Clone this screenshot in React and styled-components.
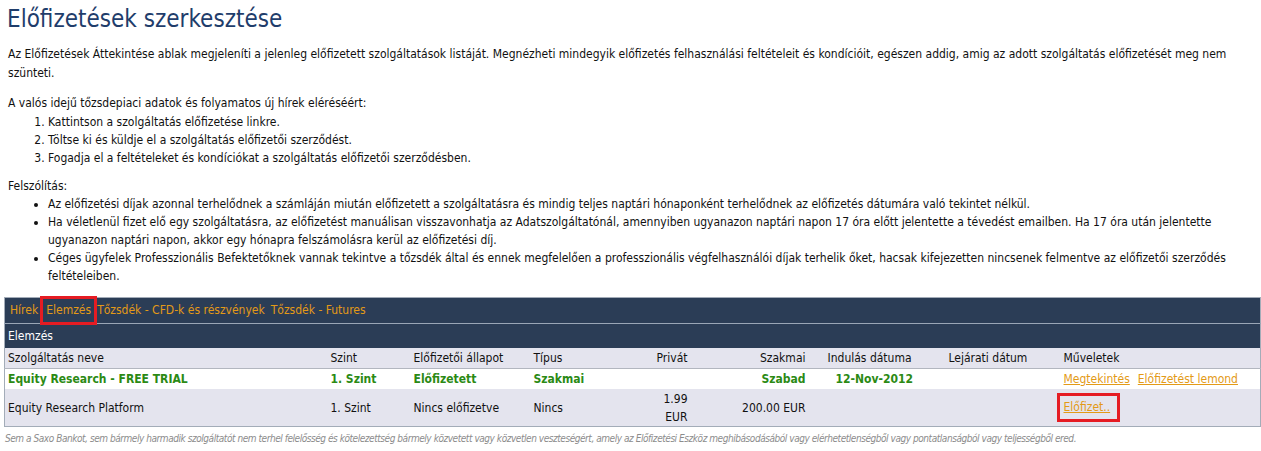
import React from 'react';
import styled, { createGlobalStyle } from 'styled-components';

const GlobalStyle = createGlobalStyle`
  body {
    margin: 0;
    font-family: "DejaVu Sans Condensed", Tahoma, "DejaVu Sans", sans-serif;
    font-size: 12px;
    color: #111;
    background: #fff;
  }
`

const Page = styled.div`
  padding: 4px 1px 0 4px;
`
const Title = styled.h1`
  margin: 0 0 11px;
  padding-left: 3px;
  font-size: 24px;
  font-weight: normal;
  line-height: 30px;
  color: #1f3d6b;
`
const Text = styled.p`
  margin: 0 0 ${p => p.gap ?? 12}px;
  padding: 0 4px;
  line-height: 18.5px;
`
const Steps = styled.ol`
  margin: 0 0 10px;
  padding-left: 44px;
  line-height: 18px;
`
const Notes = styled.ul`
  margin: 0 0 12px;
  padding-left: 44px;
  line-height: 18px;
`
const Table = styled.table`
  width: 1256px;
  border-collapse: collapse;
  border: 1px solid #a3acb8;
  table-layout: fixed;
`
const NavCell = styled.td`
  background: #2b3d56;
  height: 25px;
  padding: 0 2px;
  border-bottom: 1px solid #9aa6b6;
`
const NavLinks = styled.div`
  display: flex;
  align-items: center;
`
const NavLink = styled.span`
  color: #e39a17;
  padding: 4px 3px;
  line-height: 15px;
  ${p => p.marked && `
    position: relative;
    z-index: 1;
    margin-left: 2px;
    outline: 3px solid #e51c23;
  `}
`
const SectionCell = styled.td`
  background: #2b3d56;
  color: #fff;
  height: 24px;
  padding: 0 3px;
`
const HeadCell = styled.td`
  background: #e4e4ee;
  height: 20px;
  padding: 0 ${p => p.padRight || 3}px 0 ${p => p.padLeft || 3}px;
  text-align: ${p => p.align || 'left'};
  border-bottom: 1px solid #b2b6bf;
`
const Cell = styled.td`
  background: ${p => p.alt ? '#e4e4ee' : '#fff'};
  height: ${p => p.alt ? 37 : 20}px;
  padding: 0 ${p => p.padRight || 3}px 0 ${p => p.padLeft || 3}px;
  text-align: ${p => p.align || 'left'};
  line-height: 18px;
  color: ${p => p.active ? '#2b8a14' : '#111'};
  font-weight: ${p => p.active ? 'bold' : 'normal'};
  border-bottom: ${p => p.alt ? '1px solid #a3acb8' : 'none'};
`
const Action = styled.a`
  color: #e39a17;
  text-decoration: underline;
  margin-right: 8px;
  ${p => p.marked && `
    display: inline-block;
    padding: 2px 7px 3px 4px;
    margin-left: -4px;
    outline: 3px solid #e51c23;
  `}
`
const Footer = styled.div`
  padding: 6px 1px;
  font-size: 10px;
  letter-spacing: -0.45px;
  font-style: italic;
  color: #8c8c8c;
  white-space: nowrap;
`

const columns = [
  { label: 'Szolgáltatás neve', width: 323 },
  { label: 'Szint', width: 83 },
  { label: 'Előfizetői állapot', width: 120 },
  { label: 'Típus', width: 115 },
  { label: 'Privát', width: 45, align: 'right' },
  { label: 'Szakmai', width: 134, align: 'right', padRight: 19 },
  { label: 'Indulás dátuma', width: 121 },
  { label: 'Lejárati dátum', width: 115 },
  { label: 'Műveletek', width: 200 },
]

const rows = [
  {
    active: true,
    cells: ['Equity Research - FREE TRIAL', '1. Szint', 'Előfizetett', 'Szakmai', '', 'Szabad', '12-Nov-2012', ''],
    actions: ['Megtekintés', 'Előfizetést lemond'],
  },
  {
    active: false,
    cells: ['Equity Research Platform', '1. Szint', 'Nincs előfizetve', 'Nincs', '1.99 EUR', '200.00 EUR', '', ''],
    actions: ['Előfizet..'],
  },
]

export default function App() {
  return (
    <Page>
      <GlobalStyle />
      <Title>Előfizetések szerkesztése</Title>
      <Text>
        Az Előfizetések Áttekintése ablak megjeleníti a jelenleg előfizetett szolgáltatások listáját. Megnézheti mindegyik előfizetés felhasználási feltételeit és kondícióit, egészen addig, amig az adott szolgáltatás előfizetését meg nem szünteti.
      </Text>
      <Text gap={0}>A valós idejű tőzsdepiaci adatok és folyamatos új hírek eléréséért:</Text>
      <Steps>
        <li>Kattintson a szolgáltatás előfizetése linkre.</li>
        <li>Töltse ki és küldje el a szolgáltatás előfizetői szerződést.</li>
        <li>Fogadja el a feltételeket és kondíciókat a szolgáltatás előfizetői szerződésben.</li>
      </Steps>
      <Text gap={0}>Felszólítás:</Text>
      <Notes>
        <li>Az előfizetési díjak azonnal terhelődnek a számláján miután előfizetett a szolgáltatásra és mindig teljes naptári hónaponként terhelődnek az előfizetés dátumára való tekintet nélkül.</li>
        <li>Ha véletlenül fizet elő egy szolgáltatásra, az előfizetést manuálisan visszavonhatja az Adatszolgáltatónál, amennyiben ugyanazon naptári napon 17 óra előtt jelentette a tévedést emailben. Ha 17 óra után jelentette ugyanazon naptári napon, akkor egy hónapra felszámolásra kerül az előfizetési díj.</li>
        <li>Céges ügyfelek Professzionális Befektetőknek vannak tekintve a tőzsdék által és ennek megfelelően a professzionális végfelhasználói díjak terhelik őket, hacsak kifejezetten nincsenek felmentve az előfizetői szerződés feltételeiben.</li>
      </Notes>
      <Table>
        <colgroup>
          {columns.map(c => <col key={c.label} style={{ width: c.width }} />)}
        </colgroup>
        <tbody>
          <tr>
            <NavCell colSpan={9}>
              <NavLinks>
                <NavLink>Hírek</NavLink>
                <NavLink marked>Elemzés</NavLink>
                <NavLink>Tőzsdék - CFD-k és részvények</NavLink>
                <NavLink>Tőzsdék - Futures</NavLink>
              </NavLinks>
            </NavCell>
          </tr>
          <tr>
            <SectionCell colSpan={9}>Elemzés</SectionCell>
          </tr>
          <tr>
            {columns.map(c => (
              <HeadCell key={c.label} align={c.align} padRight={c.padRight}>{c.label}</HeadCell>
            ))}
          </tr>
          {rows.map((r, i) => (
            <tr key={i}>
              {r.cells.map((v, j) => (
                <Cell
                  key={j}
                  alt={i === 1}
                  active={r.active}
                  align={columns[j].align}
                  padRight={columns[j].padRight}
                  padLeft={j === 6 ? 11 : undefined}
                >
                  {v}
                </Cell>
              ))}
              <Cell alt={i === 1}>
                {r.actions.map(a => (
                  <Action key={a} href="#" marked={a === 'Előfizet..'}>{a}</Action>
                ))}
              </Cell>
            </tr>
          ))}
        </tbody>
      </Table>
      <Footer>
        Sem a Saxo Bankot, sem bármely harmadik szolgáltatót nem terhel felelősség és kötelezettség bármely közvetett vagy közvetlen veszteségért, amely az Előfizetési Eszköz meghibásodásából vagy elérhetetlenségből vagy pontatlanságból vagy teljességből ered.
      </Footer>
    </Page>
  )
}
